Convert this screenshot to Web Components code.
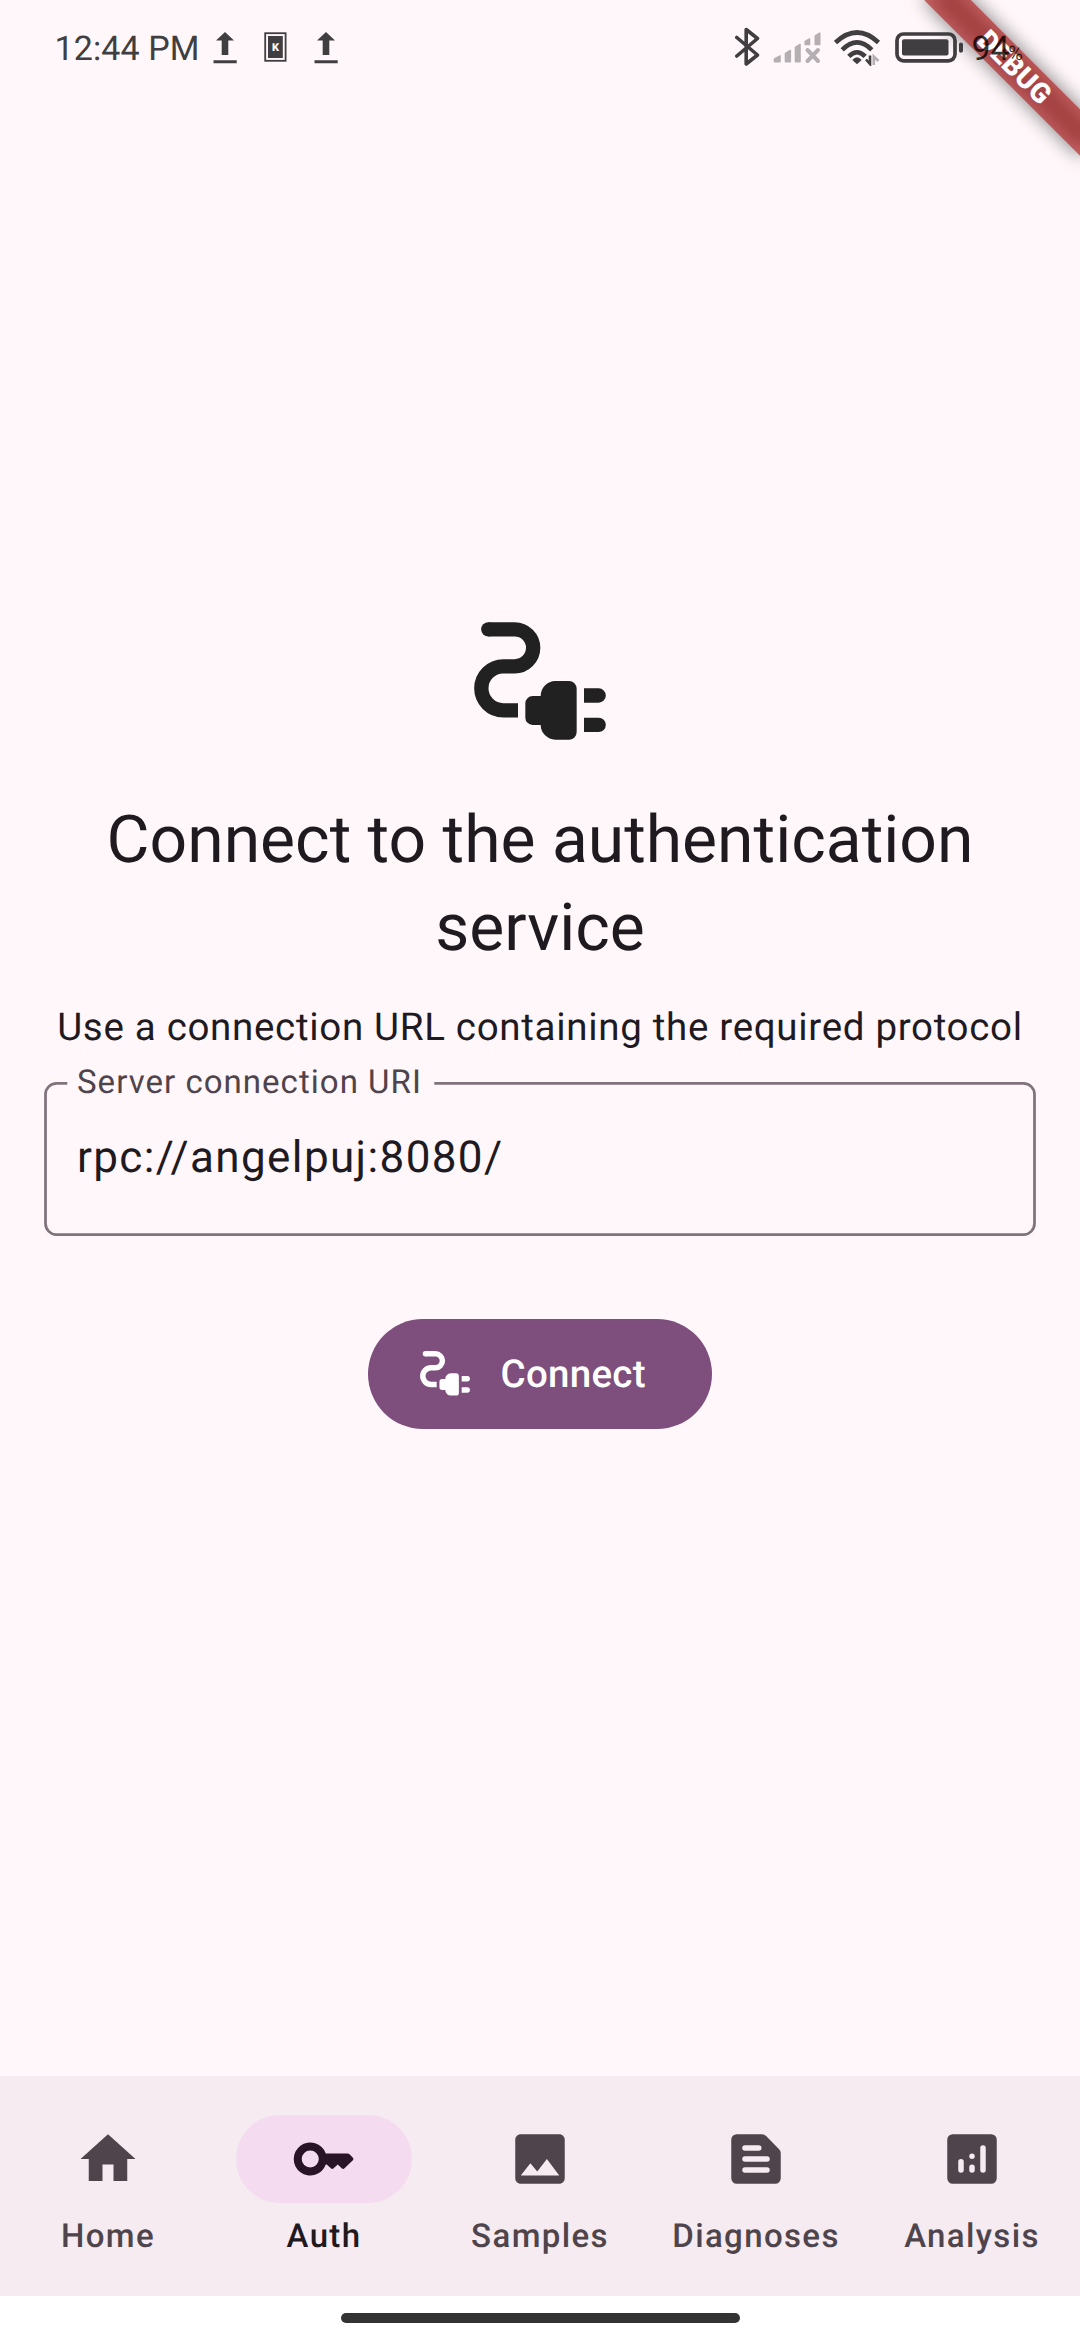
<!DOCTYPE html>
<html lang="en">
<head>
<meta charset="utf-8">
<title>Connect</title>
<style>
html,body{margin:0;padding:0;background:#fff7fa}
body{font-family:Roboto,"Noto Sans",sans-serif;text-rendering:geometricPrecision}
</style>
</head>
<body>
<auth-app></auth-app>
<script>
const define=(name,markup)=>{
  const t=document.createElement('template');
  t.innerHTML='<style>*{box-sizing:border-box}svg{display:block;flex:none}</style>'+markup;
  customElements.define(name,class extends HTMLElement{
    constructor(){super();this.attachShadow({mode:'open'}).append(t.content.cloneNode(true));}
  });
};

define('plug-icon',`<style>:host{display:block;flex:none}svg{width:100%;height:100%}</style>
<svg viewBox="102 66 396 354"><path d="M145 88H224A55 55 0 0 1 224 199H190A66 66 0 0 0 190 331H234" fill="none" stroke="currentColor" stroke-width="43"/><circle cx="145" cy="88" r="21.5" fill="currentColor"/>
<path fill="currentColor" d="M278 288H302A45 45 0 0 1 346 243H387A23 23 0 0 1 410 266V396A23 23 0 0 1 387 419H346A45 45 0 0 1 302 375H278A22 22 0 0 1 256 353V310A22 22 0 0 1 278 288ZM432 265H476A21.500 21.500 0 0 1 476 308H432ZM432 353H476A21.500 21.500 0 0 1 476 396H432Z"/></svg>`);

define('upload-icon',`<style>:host{display:block;width:24px;height:32px}</style>
<svg width="24" height="32" viewBox="0 0 24 32" fill="#403e40"><path d="M12 0L21 8.500H15.300V23H8.700V8.500H3ZM.5 28.300H23.700V31.300H.5Z"/></svg>`);

define('status-bar',`<style>
:host{display:flex;height:96px;align-items:flex-start;color:#403e40;position:relative;z-index:2}
.time{margin:29px 0 0 54.500px;width:158.500px;font-size:34px;line-height:40px;font-weight:450;white-space:nowrap;letter-spacing:.1px}
upload-icon{margin-top:31.500px}.box{margin:32px 27px 0 26.500px}
.bt{margin:27px 0 0 397px}.sig{margin:32px 0 0 13px}.wifi{margin:30px 0 0 12px}.bat{margin:31.500px 0 0 14px}
.pct{display:flex;align-items:baseline;margin:29px 0 0 8px;font-size:34px;line-height:40px;font-weight:450;color:rgba(0,0,0,.78)}
.pct small{font-size:20px;font-weight:450;margin-left:-1.500px}
</style>
<div class="time">12:44 PM</div>
<upload-icon></upload-icon>
<svg class="box" width="23" height="30" viewBox="0 0 23 30"><rect x="1.200" y="1.200" width="20.400" height="27.600" fill="none" stroke="#403e40" stroke-width="1.800"/><rect x="4" y="4" width="14.800" height="22" fill="#403e40"/><text x="11.600" y="18.700" font-size="11" font-weight="900" text-anchor="middle" fill="#fff7fa">K</text></svg>
<upload-icon></upload-icon>
<svg class="bt" width="25" height="40" viewBox="0 0 25 40" fill="none" stroke="#403e40" stroke-width="3.600" stroke-linejoin="round" stroke-linecap="round"><path d="M1.800 10.500L22.500 28L11.200 37V2.500L22.500 11.500L1.800 29"/></svg>
<svg class="sig" width="49" height="32" viewBox="0 0 49 32" fill="#b5aeb2" stroke="#b5aeb2" stroke-width="1.600" stroke-linejoin="round"><path d="M1.500 29.800V27L7 24V29.800ZM12.500 29.800V21.500L17.300 18.500V29.800ZM22.500 29.800V15.500L27 12.500V29.800ZM32.200 12.500V9.500L36.500 7V12.500ZM42.300 12.500V4L46.700 1.200V12.500Z"/><path d="M34.500 18L45 29M45 18L34.500 29" fill="none" stroke-width="4" stroke-linecap="round"/></svg>
<svg class="wifi" width="47" height="36" viewBox="0 0 47 36" fill="none" stroke="#403e40" stroke-width="4.600"><path d="M1.500 12.500Q23 -7.500 44.500 12.500M8.200 19.800Q23 5 37.800 19.800M14.800 26.400Q23 18 31.200 26.400"/><path d="M18.300 30Q23 24.500 27.700 30L23 34.300Z" fill="#403e40" stroke="none"/><path d="M32 29.500L36 34V25.500" stroke-width="2.600"/><path d="M39.800 35V26.500L44.500 31" stroke="#b5aeb2" stroke-width="2.600"/></svg>
<svg class="bat" width="69" height="31" viewBox="0 0 69 31"><rect x="2" y="2" width="58" height="26.800" rx="6.500" fill="none" stroke="#403e40" stroke-width="3.700"/><rect x="7" y="7.300" width="46.500" height="16.300" rx="2" fill="#403e40"/><path d="M64 12Q64 10.500 66 10.500Q68 11 68 12V19Q68 20.200 66 20.700Q64 20.700 64 19Z" fill="#403e40"/></svg>
<div class="pct"><span>94</span><small>%</small></div>`);

define('debug-ribbon',`<style>
:host{display:block;position:absolute;right:0;top:0;width:220px;height:220px;overflow:hidden;z-index:1}
.rib{position:absolute;left:44px;top:49.500px;width:220px;height:33px;transform:rotate(45deg)}
.shade,.band{position:absolute;inset:0}
.shade{background:rgba(0,0,0,.5);filter:blur(9.500px)}
.band{background:rgba(183,28,28,.627);color:#fff;display:flex;align-items:center;justify-content:center;font-size:28px;font-weight:900;line-height:33px}
.band span{padding-left:2px;letter-spacing:.3px}
</style><div class="rib"><div class="shade"></div><div class="band"><span>DEBUG</span></div></div>`);

define('outlined-field',`<style>
:host{display:block;position:relative;width:992px;height:154px;margin:27.500px 0 0 44px}
svg{position:absolute;left:0;top:0}
.label{position:absolute;left:33px;top:-20px;font-size:33px;line-height:42px;letter-spacing:1.030px;color:#4f444b;white-space:nowrap}
.value{padding:42px 33px 0;font-size:44px;line-height:66px;letter-spacing:1.375px;color:#1f1a1f;white-space:nowrap}
</style>
<svg width="992" height="154" viewBox="0 0 992 154"><path d="M23.300 1.375H12.500A11 11 0 0 0 1.500 12.400V141.600A11 11 0 0 0 12.500 152.600H979.500A11 11 0 0 0 990.500 141.600V12.400A11 11 0 0 0 979.500 1.375H390.300" fill="none" stroke="#81737b" stroke-width="2.750"/></svg>
<div class="label"><slot name="label"></slot></div><div class="value"><slot></slot></div>`);

define('filled-button',`<style>
:host{display:flex;align-items:flex-start;width:344px;height:110px;border-radius:55px;background:#7e4e7d;color:#fff;margin:82.500px auto 0;padding-left:52px;font-weight:500;font-size:38.500px;line-height:55px}
plug-icon{width:50px;height:44.700px;margin-top:32.700px}
span{margin:28px 0 0 30.500px;letter-spacing:.275px}
</style><plug-icon></plug-icon><span><slot></slot></span>`);

define('nav-item',`<style>
:host{display:flex;flex-direction:column;align-items:center;width:216px;padding-top:39px;color:#4f444b}
.pill{width:176px;height:88px;border-radius:44px;display:flex;align-items:center;justify-content:center}
:host([selected]) .pill{background:#f4dbef;color:#291326}
.label{margin-top:12px;font-size:33px;line-height:44px;font-weight:500;letter-spacing:1.375px;white-space:nowrap}
:host([selected]) .label{color:#1f1a1f}
</style><div class="pill"><slot name="icon"></slot></div><div class="label"><slot></slot></div>`);

define('bottom-nav',`<style>
:host{display:flex;height:220px;background:#f5ebf0}
svg{width:66px;height:66px;fill:currentColor}
</style>
<nav-item><svg slot="icon" viewBox="0 0 24 24"><path d="M10 20v-6h4v6h5v-8h3L12 3 2 12h3v8z"/></svg>Home</nav-item>
<nav-item selected><svg slot="icon" viewBox="0 0 24 24"><path fill-rule="evenodd" d="M12.650 10H20.600Q21 10 21.300 10.300L22.500 11.500Q22.850 12 22.500 12.450L19.450 15.400Q18.950 15.800 18.450 15.400L17 14L15.500 15.400Q15 15.800 14.500 15.400L13 14H12.650A6 6 0 1 1 12.650 10ZM7 8.900A3.100 3.100 0 1 0 7 15.100A3.100 3.100 0 0 0 7 8.900Z"/></svg>Auth</nav-item>
<nav-item><svg slot="icon" viewBox="0 0 24 24"><path d="M21 19V5c0-1.100-.9-2-2-2H5c-1.100 0-2 .9-2 2v14c0 1.100.9 2 2 2h14c1.100 0 2-.9 2-2zM8.500 13.500l2.500 3.010L14.500 12l4.500 6H5z"/></svg>Samples</nav-item>
<nav-item><svg slot="icon" viewBox="0 0 24 24"><path fill-rule="evenodd" d="M5 3H14.170Q15 3 15.590 3.590L20.410 8.410Q21 9 21 9.830V19A2 2 0 0 1 19 21H5A2 2 0 0 1 3 19V5A2 2 0 0 1 5 3ZM8 7A1 1 0 0 0 8 9H13A1 1 0 0 0 13 7ZM8 11A1 1 0 0 0 8 13H16A1 1 0 0 0 16 11ZM8 15A1 1 0 0 0 8 17H16A1 1 0 0 0 16 15Z"/></svg>Diagnoses</nav-item>
<nav-item><svg slot="icon" viewBox="0 0 24 24"><path fill-rule="evenodd" d="M5 3H19A2 2 0 0 1 21 5V19A2 2 0 0 1 19 21H5A2 2 0 0 1 3 19V5A2 2 0 0 1 5 3ZM7 13V16A1 1 0 0 0 9 16V13A1 1 0 0 0 7 13ZM11 15V16A1 1 0 0 0 13 16V15A1 1 0 0 0 11 15ZM12 10A1 1 0 0 0 12 12A1 1 0 0 0 12 10ZM15 8V16A1 1 0 0 0 17 16V8A1 1 0 0 0 15 8Z"/></svg>Analysis</nav-item>`);

define('connect-page',`<style>
:host{display:block;flex:1;padding-top:526px;color:#1f1a1f}
plug-icon{width:132px;height:118px;margin:0 auto;color:#212121}
h1{margin:57px 44px 0;font-size:66px;line-height:88px;font-weight:400;text-align:center}
p{margin:26.500px 0 0;font-size:38.500px;line-height:55px;letter-spacing:.6875px;text-align:center;white-space:nowrap}
</style>
<plug-icon></plug-icon>
<h1>Connect to the authentication service</h1>
<p>Use a connection URL containing the required protocol</p>
<outlined-field><span slot="label">Server connection URI</span>rpc://angelpuj:8080/</outlined-field>
<filled-button>Connect</filled-button>`);

define('auth-app',`<style>
:host{display:flex;flex-direction:column;position:relative;width:1080px;height:2340px;background:#fff7fa;overflow:hidden}
.home{height:44px;background:#fff;display:flex;justify-content:center;padding-top:17px}
.home i{width:399px;height:10px;border-radius:5px;background:#333}
</style>
<status-bar></status-bar><debug-ribbon></debug-ribbon>
<connect-page></connect-page>
<bottom-nav></bottom-nav>
<div class="home"><i></i></div>`);
</script>
</body>
</html>
